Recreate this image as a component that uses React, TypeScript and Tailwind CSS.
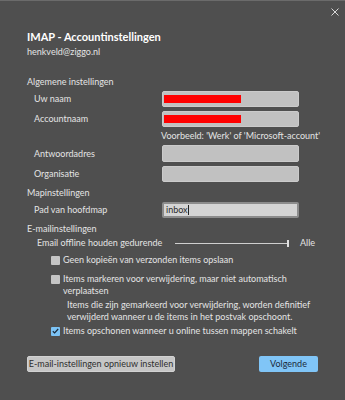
import React from 'react';

const Field = ({ label, children, h = 'h-[16px]', mt }: { label: string; children?: React.ReactNode; h?: string; mt: string }) => (
  <div className={`grid grid-cols-[135px_137px] ${mt}`}>
    <div className="pl-[7px] flex items-center">{label}</div>
    <div className={`${h} bg-[#c1c1c1] border border-[#cbcbcb] rounded-[2px] flex items-center`}>{children}</div>
  </div>
);

const Redacted = () => <div className="w-[77px] h-[8px] bg-[#ff0000]" />;

const Box = ({ checked }: { checked?: boolean }) =>
  checked ? (
    <span className="w-[9px] h-[9px] rounded-[1px] bg-[#7cc3f5] flex items-center justify-center shrink-0">
      <svg width="7" height="6" viewBox="0 0 7 6">
        <path d="M0.8 3.2 L2.6 4.9 L6.2 1" stroke="#1b2a3a" strokeWidth="1.2" fill="none" />
      </svg>
    </span>
  ) : (
    <span className="w-[9px] h-[9px] rounded-[1px] bg-[#c4c4c4] shrink-0" />
  );

const App = () => {
  return (
    <div className="w-[345px] h-[400px] bg-[#4f4f4f] border-t border-[#6b6b6b] relative text-[9px] leading-[12px] text-[#e4e4e4] font-['Lato',sans-serif] whitespace-nowrap">
      <svg className="absolute top-[7px] right-[6px]" width="8" height="8" viewBox="0 0 8 8">
        <path d="M0.5 0.5 L7.5 7.5 M7.5 0.5 L0.5 7.5" stroke="#d8d8d8" strokeWidth="1" />
      </svg>

      <div className="pl-[27px] pt-[27px]">
        <h1 className="text-[11px] leading-[18px] font-bold text-white">IMAP - Accountinstellingen</h1>
        <div className="leading-[12px]">henkveld@ziggo.nl</div>

        <div className="mt-[17px] h-[14px] flex items-center">Algemene instellingen</div>
        <Field label="Uw naam" mt="mt-[2px]">
          <div className="ml-[1px]"><Redacted /></div>
        </Field>
        <Field label="Accountnaam" mt="mt-[4px]">
          <div className="ml-[1px]"><Redacted /></div>
        </Field>
        <div className="mt-[2px] h-[14px] pl-[134px] flex items-center">
          Voorbeeld: 'Werk' of 'Microsoft-account'
        </div>
        <Field label="Antwoordadres" h="h-[17px]" mt="mt-[2px]" />
        <Field label="Organisatie" mt="mt-[4px]" />

        <div className="mt-[4px] h-[14px] flex items-center">Mapinstellingen</div>
        <div className="grid grid-cols-[135px_137px] mt-[2px]">
          <div className="pl-[7px] flex items-center">Pad van hoofdmap</div>
          <div className="h-[16px] bg-[#d4d4d4] border-2 border-[#8c8c8c] rounded-[2px] flex items-center pl-[2px] text-[#2a2a2a]">
            inbox<span className="w-px h-[10px] bg-[#222]" />
          </div>
        </div>

        <div className="mt-[4px] h-[14px] flex items-center">E-mailinstellingen</div>
        <div className="h-[14px] flex items-center pl-[10px]">
          <span className="w-[138px]">Email offline houden gedurende</span>
          <div className="w-[114px] flex items-center">
            <div className="flex-1 h-px bg-[#cfcfcf]" />
            <div className="w-[2px] h-[7px] bg-[#e0e0e0]" />
          </div>
          <span className="ml-[11px]">Alle</span>
        </div>

        <div className="mt-[3px] h-[14px] flex items-center gap-[3px] pl-[24px]">
          <Box />
          <span>Geen kopieën van verzonden items opslaan</span>
        </div>
        <div className="mt-[6px] flex gap-[3px] pl-[24px]">
          <div className="h-[12px] flex items-center"><Box /></div>
          <span>Items markeren voor verwijdering, maar niet automatisch<br />verplaatsen</span>
        </div>
        <div className="mt-[2px] pl-[40px]">
          Items die zijn gemarkeerd voor verwijdering, worden definitief<br />
          verwijderd wanneer u de items in het postvak opschoont.
        </div>
        <div className="mt-[2px] h-[12px] flex items-center gap-[3px] pl-[24px]">
          <Box checked />
          <span>Items opschonen wanneer u online tussen mappen schakelt</span>
        </div>

        <div className="mt-[19px] w-[291px] flex justify-between">
          <button className="w-[148px] h-[16px] bg-[#c6c6c6] border border-[#d2d2d2] rounded-[2px] text-[#2e2e2e] leading-[12px]">
            E-mail-instellingen opnieuw instellen
          </button>
          <button className="w-[59px] h-[16px] bg-[#80c5f7] rounded-[2px] text-[#1c2a3a] leading-[12px]">
            Volgende
          </button>
        </div>
      </div>
    </div>
  );
};

export default App;
